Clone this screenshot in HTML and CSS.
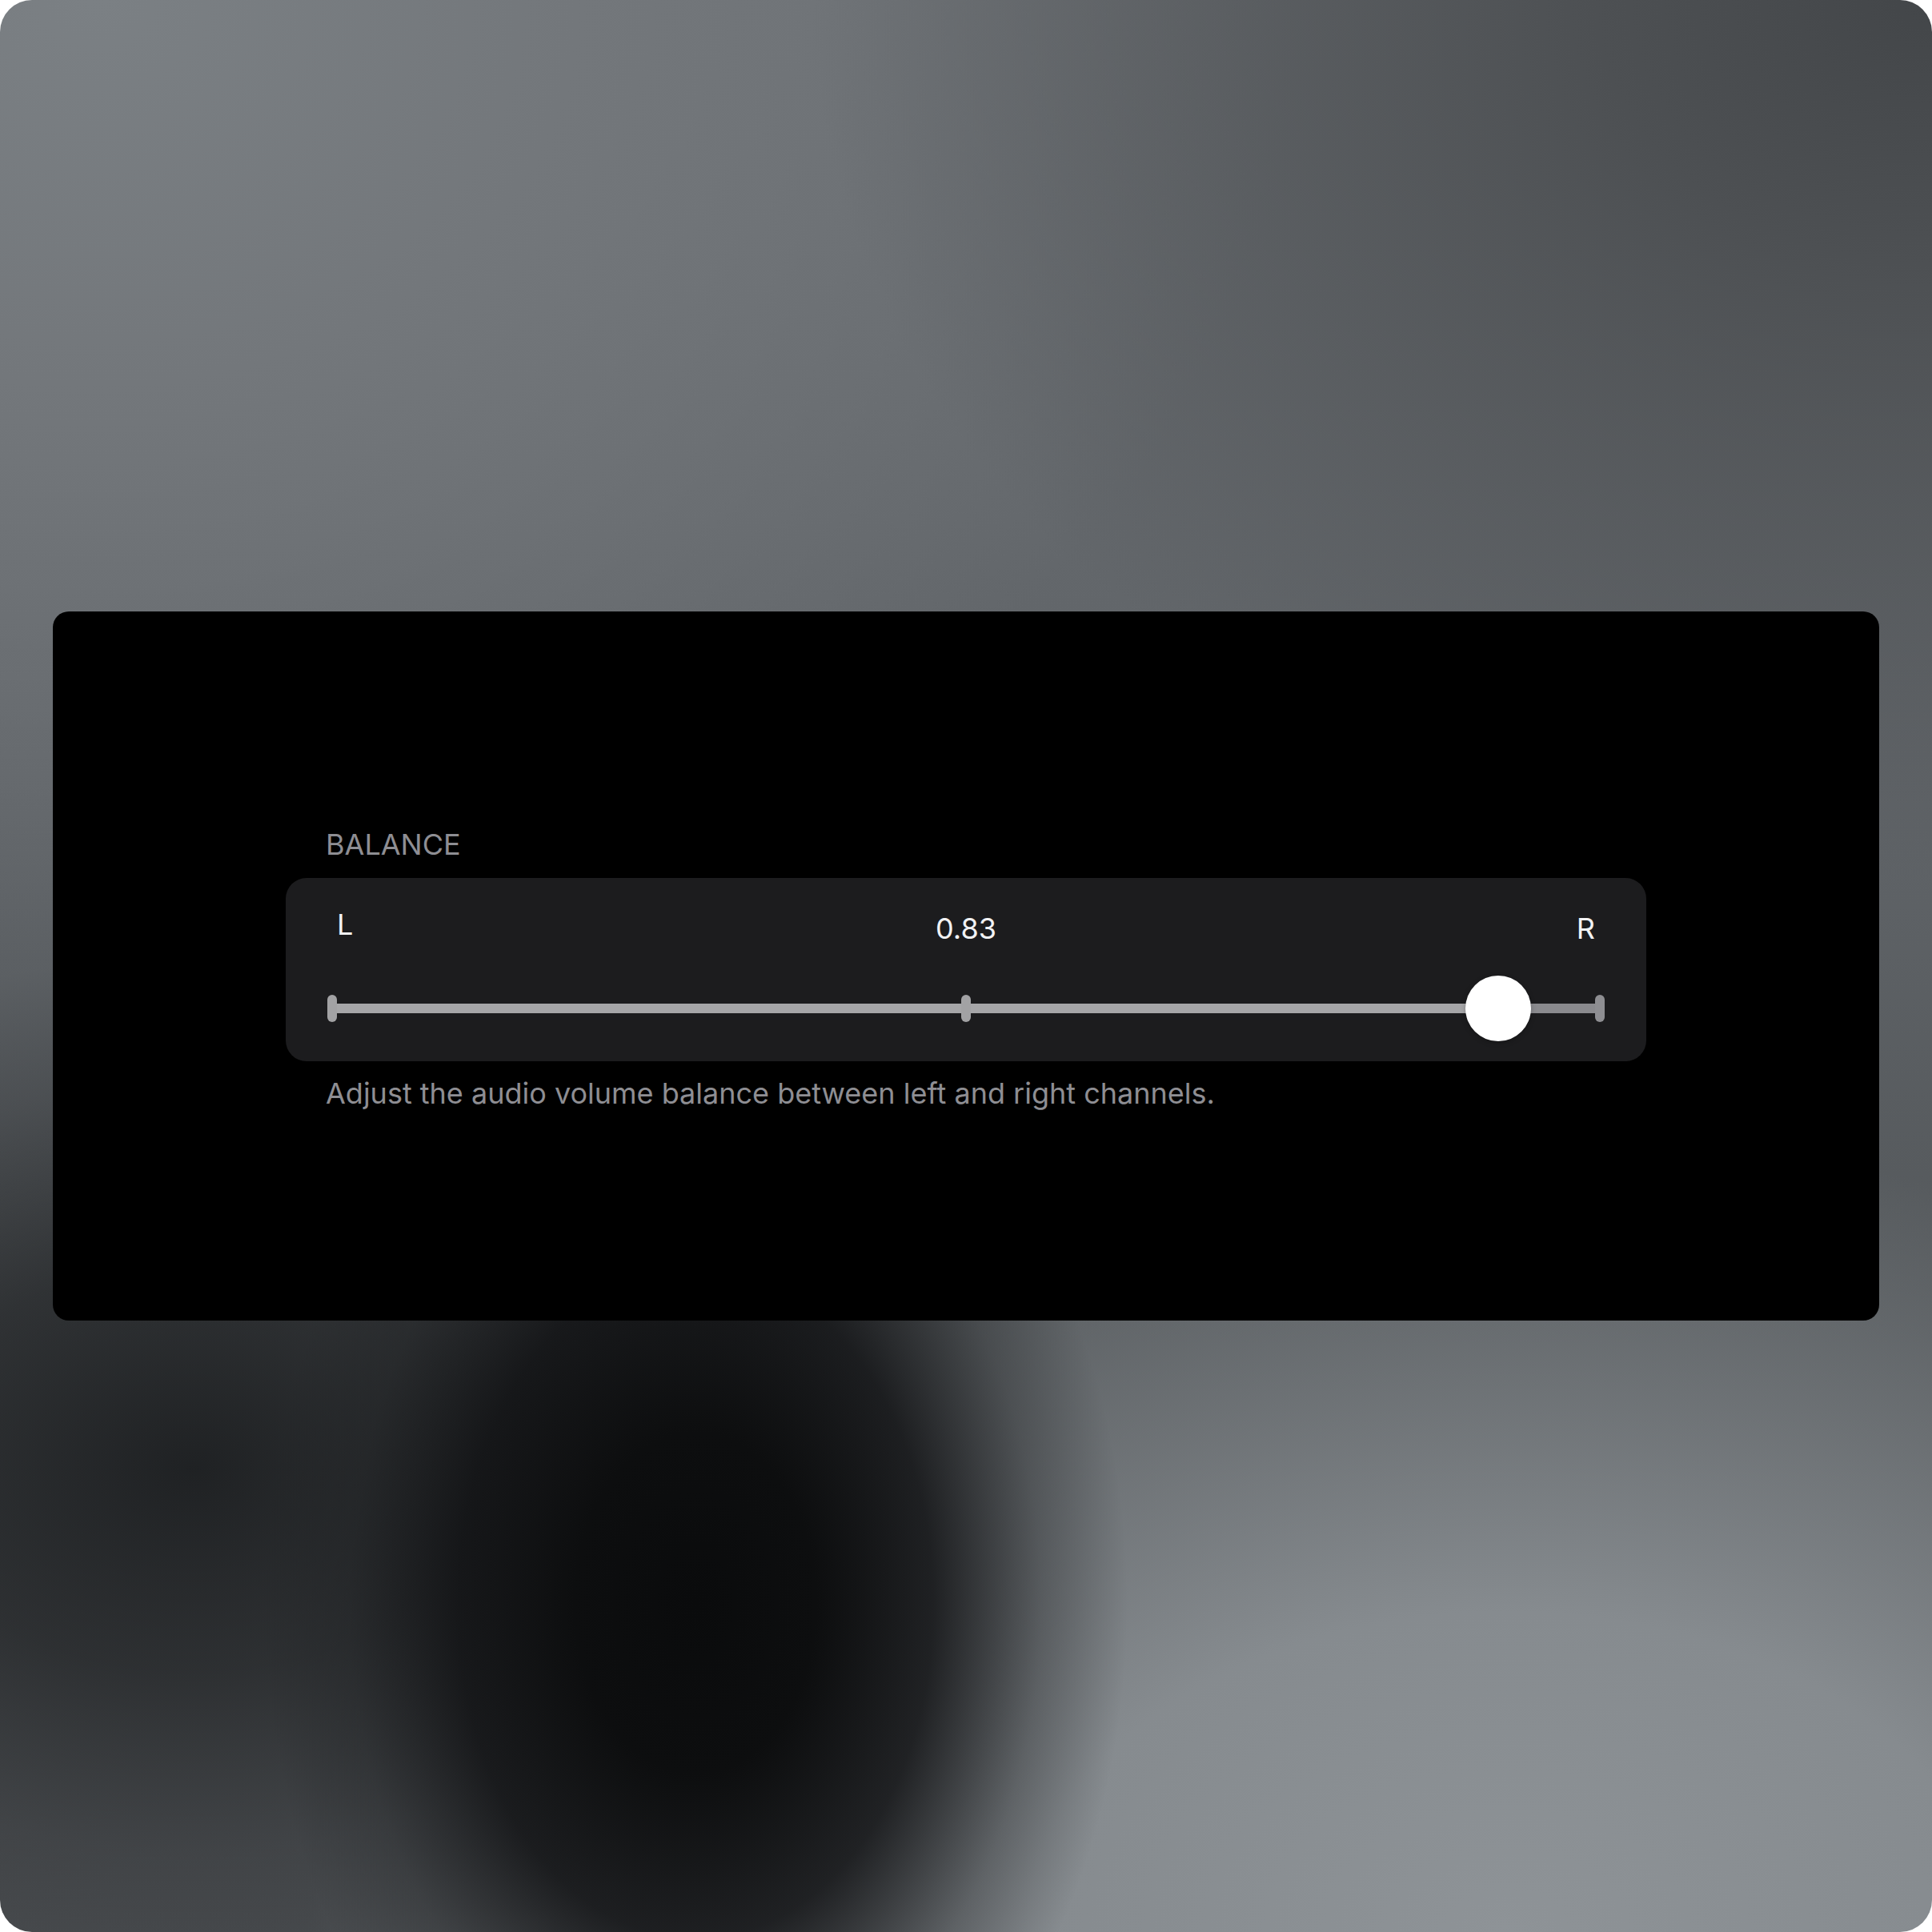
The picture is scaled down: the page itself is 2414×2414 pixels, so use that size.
FILE: index.html
```html
<!DOCTYPE html>
<html lang="en">
<head>
<meta charset="utf-8">
<title>Balance</title>
<link rel="stylesheet" href="styles.css">
</head>
<body>
<div class="frame">
  <div class="card">
    <div class="group">
      <div class="label">BALANCE</div>
      <div class="panel">
        <div class="readout">
          <span class="side side-l">L</span>
          <span class="value">0.83</span>
          <span class="side side-r">R</span>
        </div>
        <div class="slider">
          <div class="track">
            <div class="fill" style="width:92%"></div>
            <span class="tick tick-start"></span>
            <span class="tick tick-mid"></span>
            <span class="tick tick-end"></span>
            <span class="thumb" style="left:92%"></span>
          </div>
        </div>
      </div>
      <div class="desc">Adjust the audio volume balance between left and right channels.</div>
    </div>
  </div>
</div>
</body>
</html>
```
FILE: styles.css
```css
html, body {
  margin: 0;
  padding: 0;
  background: #ffffff;
}

body {
  font-family: "Inter", "Noto Sans", "Liberation Sans", sans-serif;
}

.frame {
  width: 2414px;
  height: 2414px;
  box-sizing: border-box;
  border-radius: 40px;
  overflow: hidden;
  display: flex;
  align-items: center;
  padding: 0 66px;
  background:
    radial-gradient(ellipse 540px 760px at 36% 83%, #0a0b0c 0%, #0d0e0f 28%, rgba(17, 18, 20, 0.85) 55%, rgba(30, 32, 34, 0.35) 80%, rgba(30, 32, 34, 0) 100%),
    radial-gradient(ellipse 900px 640px at 10% 76%, rgba(26, 28, 30, 0.9) 0%, rgba(32, 34, 36, 0.7) 40%, rgba(45, 47, 50, 0.3) 75%, rgba(50, 52, 55, 0) 100%),
    radial-gradient(ellipse 1500px 1000px at 78% 100%, #8e9397 0%, #868b8f 40%, rgba(128, 133, 137, 0) 100%),
    radial-gradient(ellipse 1400px 1100px at 100% 0%, #434649 0%, #4d5053 30%, rgba(90, 94, 98, 0) 100%),
    radial-gradient(ellipse 1500px 1200px at 5% 0%, #7b8084 0%, #73777b 40%, rgba(110, 114, 118, 0) 100%),
    linear-gradient(180deg, #6a6e72 0%, #606468 40%, #53575a 70%, #484b4e 100%);
}

.card {
  flex: 1;
  height: 886px;
  background: #000000;
  border-radius: 20px;
  display: flex;
  align-items: center;
  justify-content: center;
}

.group {
  width: 1700px;
  padding-top: 8px;
}

.label {
  padding-left: 50px;
  font-size: 36px;
  line-height: 41px;
  color: #8e8e93;
  margin-bottom: 21px;
}

.panel {
  background: #1c1c1e;
  border-radius: 26px;
  padding: 43px 52px 25px;
}

.readout {
  display: grid;
  grid-template-columns: 1fr auto 1fr;
  align-items: start;
  padding: 0 12px;
  font-size: 36px;
  line-height: 41px;
  color: #f2f2f4;
}

.side-l {
  justify-self: start;
  margin-top: -5px;
}

.value {
  justify-self: center;
}

.side-r {
  justify-self: end;
}

.slider {
  margin-top: 38px;
  height: 82px;
  display: flex;
  align-items: center;
  padding: 0 6px;
}

.track {
  position: relative;
  flex: 1;
  height: 12px;
  background: #8a8a8e;
}

.fill {
  height: 100%;
  background: #a6a6a8;
}

.tick {
  position: absolute;
  top: 50%;
  width: 12px;
  height: 34px;
  border-radius: 6px;
  background: #a2a2a4;
  transform: translate(-50%, -50%);
}

.tick-start { left: 0; }
.tick-mid { left: 50%; }
.tick-end { left: 100%; background: #8e8e92; }

.thumb {
  position: absolute;
  top: 50%;
  width: 82px;
  height: 82px;
  border-radius: 50%;
  background: #ffffff;
  transform: translate(-50%, -50%);
  box-shadow: 0 2px 6px rgba(0, 0, 0, 0.25);
}

.desc {
  margin-top: 20px;
  padding-left: 50px;
  font-size: 36px;
  line-height: 41px;
  color: #8e8e93;
}
```
